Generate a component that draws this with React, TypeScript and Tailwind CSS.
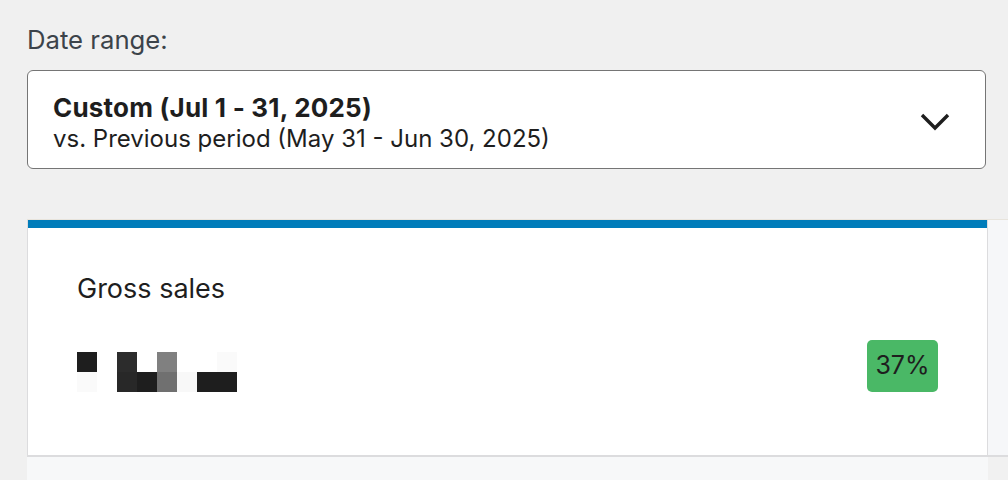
const blob: string[][] = [
  ["#1e1e1e", "#ffffff", "#2c2c2c", "#ffffff", "#808080", "#ffffff", "#ffffff", "#fafafa"],
  ["#fafafa", "#ffffff", "#282828", "#1e1e1e", "#707070", "#f8f8f8", "#1e1e1e", "#1e1e1e"],
];

function Pixelated() {
  return (
    <div className="flex flex-col">
      {blob.map((row, r) => (
        <div key={r} className="flex">
          {row.map((c, i) => (
            <div key={i} className="h-5 w-5" style={{ backgroundColor: c }} />
          ))}
        </div>
      ))}
    </div>
  );
}

export default function App() {
  return (
    <div className="h-[480px] w-[1008px] overflow-hidden bg-[#f0f0f0] pl-[27px] pt-[23px] font-['Inter',sans-serif] text-[#1e1e1e]">
      <div className="text-[25.7px] leading-[34px] text-[#3c434a]">Date range:</div>

      <button
        type="button"
        className="mt-[13px] flex h-[99px] w-[959px] items-center justify-between rounded-[6px] border-[1.5px] border-[#757575] bg-white pl-[25px] pr-[35px] text-left"
      >
        <div className="flex flex-col pt-[6px]">
          <span className="text-[26px] font-bold leading-[31px] tracking-[0.2px]">Custom (Jul 1 - 31, 2025)</span>
          <span className="text-[24px] leading-[31px]">vs. Previous period (May 31 - Jun 30, 2025)</span>
        </div>
        <svg width="30" height="20" viewBox="0 0 30 20" className="mt-[4px]">
          <path d="M2 3 L15 16 L28 3" fill="none" stroke="#1e1e1e" strokeWidth="3.4" />
        </svg>
      </button>

      <div className="mt-[50px] flex border-t border-[#e8e4dc]">
        <div className="w-[961px] shrink-0">
          <div className="flex h-[237px] flex-col border-x border-b-2 border-[#dcdcde] bg-white">
            <div className="h-[8px] bg-[#007cba]" />
            <div className="px-[49px] pt-[43px]">
              <div className="text-[27px] leading-[36px]">Gross sales</div>
              <div className="mt-[33px] flex items-center justify-between">
                <div className="pt-[11px]">
                  <Pixelated />
                </div>
                <div className="flex h-[52px] w-[71px] items-center justify-center rounded-[5px] bg-[#4ab866] text-[25px]">
                  37%
                </div>
              </div>
            </div>
          </div>
          <div className="h-[30px] bg-[#f7f8f9]" />
        </div>
        <div className="flex-1">
          <div className="h-[237px] border-b-2 border-[#dcdcde] bg-[#f6f7f9]" />
          <div className="h-[30px] bg-[#f1f1f1]" />
        </div>
      </div>
    </div>
  );
}
